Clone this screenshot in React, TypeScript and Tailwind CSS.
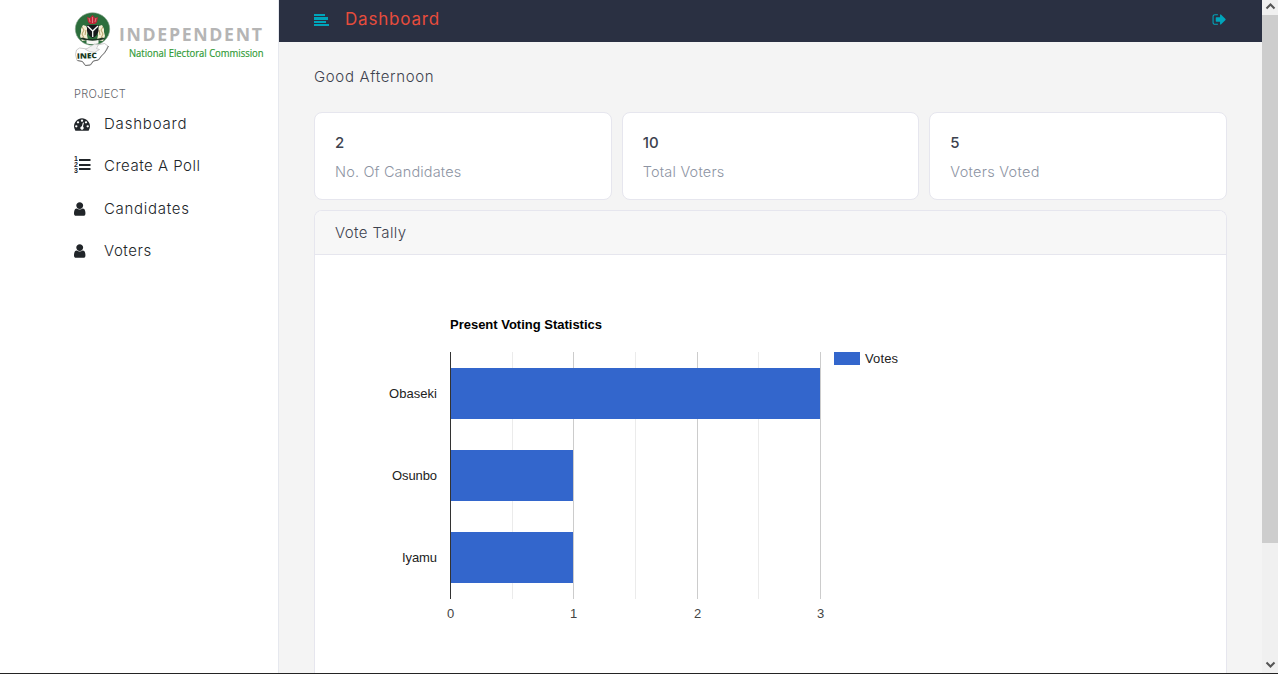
import type { ReactNode } from "react";

const ICONS = {
  dashboard:
    "M384 1152q0-53-37.5-90.5t-90.5-37.5-90.5 37.5-37.5 90.5 37.5 90.5 90.5 37.5 90.5-37.5 37.5-90.5zm192-448q0-53-37.5-90.5t-90.5-37.5-90.5 37.5-37.5 90.5 37.5 90.5 90.5 37.5 90.5-37.5 37.5-90.5zm428 481l101-382q6-26-7.5-48.5t-38.5-29.5-48 6.5-30 39.5l-101 382q-60 5-107 43.5t-63 98.5q-20 77 20 146t117 89 146-20 89-117q16-60-6-117t-72-91zm660-33q0-53-37.5-90.5t-90.5-37.5-90.5 37.5-37.5 90.5 37.5 90.5 90.5 37.5 90.5-37.5 37.5-90.5zm-640-640q0-53-37.5-90.5t-90.5-37.5-90.5 37.5-37.5 90.5 37.5 90.5 90.5 37.5 90.5-37.5 37.5-90.5zm448 192q0-53-37.5-90.5t-90.5-37.5-90.5 37.5-37.5 90.5 37.5 90.5 90.5 37.5 90.5-37.5 37.5-90.5zm320 448q0 261-141 483-19 29-54 29h-1402q-35 0-54-29-141-221-141-483 0-182 71-348t191-286 286-191 348-71 348 71 286 191 191 286 71 348z",
  user: "M1280 1399q0 109-62.5 187t-150.5 78h-854q-88 0-150.5-78t-62.5-187q0-85 8.5-160.5t31.5-152 58.5-131 94-89 134.5-34.5q131 128 313 128t313-128q76 0 134.5 34.5t94 89 58.5 131 31.5 152 8.5 160.5zm-256-887q0 159-112.5 271.5t-271.5 112.5-271.5-112.5-112.5-271.5 112.5-271.5 271.5-112.5 271.5 112.5 112.5 271.5z",
  signOut:
    "M704 1440q0 4 1 20t.5 26.5-3 23.5-10 19.5-20.5 6.5h-320q-119 0-203.5-84.5t-84.5-203.5v-704q0-119 84.5-203.5t203.5-84.5h320q13 0 22.500 9.500t9.500 22.500q0 4 1 20t.5 26.500-3 23.500-10 19.500-20.500 6.500h-320q-66 0-113 47t-47 113v704q0 66 47 113t113 47h312l11.500 1 11.500 3 8 5.500 7 9 2 13.500zm928-544q0 26-19 45l-544 544q-19 19-45 19t-45-19-19-45v-288h-448q-26 0-45-19t-19-45v-384q0-26 19-45t45-19h448v-288q0-26 19-45t45-19 45 19l544 544q19 19 19 45z",
};

function Glyph({ d, className }: { d: string; className: string }) {
  return (
    <svg viewBox="0 0 1792 1792" className={className} fill="currentColor">
      <path d={d} />
    </svg>
  );
}

function NumberedListIcon() {
  return (
    <svg viewBox="0 0 17 17" className="-mt-1 h-[17px] w-[17px]" fill="currentColor">
      <rect x="5" y="3" width="11.5" height="2" />
      <rect x="5" y="8" width="11.5" height="2" />
      <rect x="5" y="12" width="11.5" height="2" />
      <g fontFamily="Liberation Sans, sans-serif" fontWeight="700" fontSize="7">
        <text x="0" y="5.2">1</text>
        <text x="0" y="10.900">2</text>
        <text x="0" y="16.600">3</text>
      </g>
    </svg>
  );
}

function Logo() {
  return (
    <svg viewBox="0 0 200 60" width="200" height="60" className="block">
      {/* national crest */}
      <ellipse cx="18.500" cy="19" rx="17.200" ry="16.300" fill="#2c6e3c" stroke="#8aa68f" strokeWidth="0.600" />
      <path d="M7 19l2-4 3 1 2 4-1 5 1 5-6 1-2-5 1-4zM30 19l-2-4-3 1-2 4 1 5-1 5 6 1 2-5-1-4z" fill="#f3ecd2" />
      <path d="M8 17l2 3-2 4 2 4M29 17l-2 3 2 4-2 4M12 20l-1 5M25 20l1 5" fill="none" stroke="#b09a5c" strokeWidth="0.900" />
      <path d="M13 7l3 1 2.500-3L21 8l3-1-1 5-2 2h-5l-2-2z" fill="#c02737" />
      <path d="M15 8l1 4M18.500 7v6M22 8l-1 4" stroke="#e9a0a5" strokeWidth="0.700" />
      <path d="M13 15h11.500v6q-1 5-5.800 7-4.700-2-5.700-7z" fill="#15171a" />
      <path d="M13.500 16l5.200 5L24 16M18.700 21v6" fill="none" stroke="#f5f5f5" strokeWidth="1.300" />
      <path d="M8 27.500q10 3 21 0l2 1.500q-12 4-25 0z" fill="#1d3323" />
      <path d="M12.500 30q6 1.500 12 0v3.500q-6 1.500-12 0z" fill="#f7f7f3" />
      {/* map outline */}
      <path d="M2.500 40l3-2 8 1 5-1 5-3 7-1.500 3.500 2.500-2 4-2 3-3 3-3 4-5 1-3 4-5 .5-3-4-5-1-1.500-6z" fill="#fff" stroke="#b5b5b5" strokeWidth="0.700" />
      <path d="M34.500 36l-2 4-2 3-3 3-3 4-5 1-3 4-5 .5-3-4-5-1" fill="none" stroke="#666" strokeWidth="0.900" />
      <path d="M11.500 39.500l5-3 4-2.500 4 .5-2 4 3 1-5 3-5-1z" fill="#f2f2f2" stroke="#b5b5b5" strokeWidth="0.600" />
      <text x="3" y="48.500" fontFamily="Open Sans, sans-serif" fontSize="7.500" fontWeight="800" fill="#173820" textLength="20" lengthAdjust="spacingAndGlyphs" transform="rotate(-2 12 48)">INEC</text>
      <text x="45" y="31.300" fontFamily="Open Sans, sans-serif" fontSize="17.700" fontWeight="700" fill="#b5b5b5" textLength="143" lengthAdjust="spacing">INDEPENDENT</text>
      <text x="55" y="47" fontFamily="Open Sans, sans-serif" fontSize="11" fontWeight="500" fill="#2f9a35" stroke="#2f9a35" strokeWidth="0.200" textLength="134.500" lengthAdjust="spacingAndGlyphs">National Electoral Commission</text>
    </svg>
  );
}

function NavItem({ icon, label, className }: { icon: ReactNode; label: string; className: string }) {
  return (
    <a className="flex h-[42.4px] items-center">
      <span className="flex w-[30px] shrink-0 items-center">{icon}</span>
      <span className={className}>{label}</span>
    </a>
  );
}

function StatCard({ value, label, className }: { value: string; label: string; className: string }) {
  return (
    <div className="h-[88px] rounded-lg border border-[#e6e6ee] bg-white px-5 pt-[18px]">
      <div className="text-[15px] leading-6 font-medium text-[#3d424e]">{value}</div>
      <div className={`mt-[5px] text-[14.500px] leading-6 font-light text-[#8d94a3] ${className}`}>{label}</div>
    </div>
  );
}

const ROWS = [
  { name: "Obaseki", votes: 3, y: 368, width: 48 },
  { name: "Osunbo", votes: 1, y: 450, width: 45 },
  { name: "Iyamu", votes: 1, y: 532, width: 35 },
];

function VotesChart() {
  return (
    <svg
      viewBox="315 255 911 419"
      width="911"
      height="419"
      className="block shrink-0"
      fontFamily="Liberation Sans, Arial, sans-serif"
      fontSize="13"
      shapeRendering="crispEdges"
    >
      <text x="450" y="329" fontWeight="700" textLength="152" lengthAdjust="spacing">Present Voting Statistics</text>
      {[512, 635, 758].map((x) => (
        <rect key={x} x={x} y="352" width="1" height="247" fill="#ebebeb" />
      ))}
      {[573, 697, 820].map((x) => (
        <rect key={x} x={x} y="352" width="1" height="247" fill="#ccc" />
      ))}
      {ROWS.map((r) => (
        <g key={r.name}>
          <rect x="451" y={r.y} width={r.votes === 3 ? 369 : 122} height="51" fill="#3366cc" />
          <text x="437" y={r.y + 30} textAnchor="end" fill="#222" textLength={r.width}>{r.name}</text>
        </g>
      ))}
      <rect x="450" y="352" width="1" height="247" fill="#333" />
      {[450.5, 573.5, 697.5, 820.5].map((x, i) => (
        <text key={x} x={x} y="618" textAnchor="middle" fill="#444">{i}</text>
      ))}
      <rect x="834" y="352" width="26" height="13" fill="#3366cc" />
      <text x="865" y="363" fill="#222" textLength="33">Votes</text>
    </svg>
  );
}

export default function App() {
  return (
    <div className="flex h-[674px] w-[1278px] flex-col overflow-hidden bg-white font-['Inter',sans-serif]">
      <div className="flex min-h-0 flex-1">
        <aside className="w-[279px] shrink-0 border-r border-[#e6e8ee] pt-[10px] pl-[74px] text-[#212529]">
          <Logo />
          <div className="mt-[16px] text-[11px] leading-4 font-light tracking-[0.300px] text-[#5f6368]">PROJECT</div>
          <nav className="mt-[1px] text-[15px] font-light">
            <NavItem icon={<Glyph d={ICONS.dashboard} className="h-4 w-4" />} label="Dashboard" className="tracking-[0.800px]" />
            <NavItem icon={<NumberedListIcon />} label="Create A Poll" className="tracking-[0.500px]" />
            <NavItem icon={<Glyph d={ICONS.user} className="h-4 w-4" />} label="Candidates" className="tracking-[0.700px]" />
            <NavItem icon={<Glyph d={ICONS.user} className="h-4 w-4" />} label="Voters" className="tracking-[0.550px]" />
          </nav>
        </aside>

        <div className="flex min-w-0 flex-1 flex-col bg-[#f4f4f4]">
          <header className="flex h-[42px] shrink-0 items-center bg-[#2a3042] pr-[35px] pb-[3px] pl-[35px]">
            <svg viewBox="0 0 15 12" className="h-3 w-[15px]" fill="#00a5bb" shapeRendering="crispEdges">
              <rect width="11" height="2" />
              <rect y="3" width="14" height="3" />
              <rect y="7" width="12" height="2" />
              <rect y="10" width="15" height="2" />
            </svg>
            <span className="-mt-px ml-4 text-[17px] leading-6 tracking-[0.800px] text-[#e74c3c]">Dashboard</span>
            <Glyph d={ICONS.signOut} className="ml-auto h-[15px] w-[15px] text-[#00a5bb]" />
          </header>

          <main className="flex min-h-0 flex-1 flex-col overflow-hidden pr-[35px] pl-[35px]">
            <div className="mt-[23px] text-[15px] leading-6 font-light tracking-[0.650px] text-[#3d424e]">Good Afternoon</div>
            <div className="mt-[23px] grid grid-cols-3 gap-[10px]">
              <StatCard value="2" label="No. Of Candidates" className="tracking-[0.150px]" />
              <StatCard value="10" label="Total Voters" className="tracking-[0.200px]" />
              <StatCard value="5" label="Voters Voted" className="tracking-[0.280px]" />
            </div>
            <section className="mt-[10px] flex-1 overflow-hidden rounded-t-lg border border-b-0 border-[#e6e6ee] bg-white">
              <h2 className="h-[44px] border-b border-[#e6e6ee] bg-[#f7f7f7] pl-5 text-[15px] leading-[43px] font-light tracking-[0.400px] text-[#3d424e]">
                Vote Tally
              </h2>
              <VotesChart />
            </section>
          </main>
        </div>

        <div className="flex w-4 shrink-0 flex-col items-center bg-[#f0f0f0]">
          <svg viewBox="0 0 16 15" className="h-[15px] w-4 shrink-0" fill="none" stroke="#555" strokeWidth="2">
            <path d="M4.500 8.500L8.500 4.500l4 4" />
          </svg>
          <div className="h-[528px] w-full bg-[#cdcdcd]" />
          <svg viewBox="0 0 16 15" className="mt-auto h-[15px] w-4 shrink-0" fill="none" stroke="#555" strokeWidth="2">
            <path d="M4.500 4.500l4 4 4-4" />
          </svg>
        </div>
      </div>
      <div className="h-px shrink-0 bg-[#242424]" />
    </div>
  );
}
